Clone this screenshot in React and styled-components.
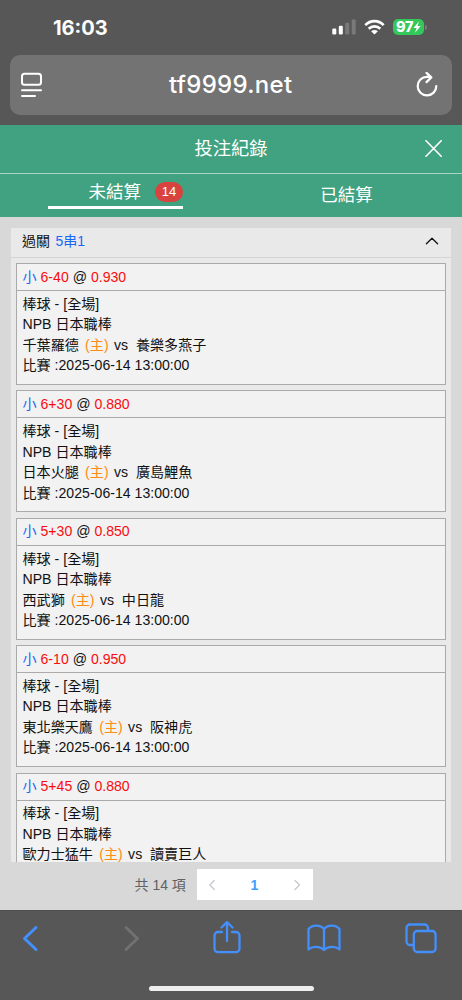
import React from "react";
import styled, { createGlobalStyle } from "styled-components";

const GlobalStyle = createGlobalStyle`
  * {
    box-sizing: border-box;
  }

  body {
    margin: 0;
    background: #575757;
    font-family: "Liberation Sans", "Noto Sans CJK TC", sans-serif;
  }
`;

const Phone = styled.div`
  display: flex;
  flex-direction: column;
  width: 462px;
  height: 1000px;
  overflow: hidden;
  background: #575757;
`;

const StatusBar = styled.div`
  display: flex;
  align-items: center;
  height: 55px;
  padding: 0 35px 1px 53px;
  color: #fff;
`;

const Clock = styled.span`
  flex: 1;
  padding-top: 1px;
  font: 700 20px/24px Inter, sans-serif;
`;

const StatusIcons = styled.div`
  display: flex;
  align-items: center;
  gap: 8px;
`;

const Battery = styled.div`
  display: flex;
  align-items: center;
  gap: 1px;
`;

const BatteryBody = styled.span`
  display: flex;
  align-items: center;
  justify-content: center;
  width: 31px;
  height: 16px;
  border-radius: 5px;
  background: #34c759;
  font: 800 14.5px/16px Inter, sans-serif;
  letter-spacing: -0.4px;
`;

const BatteryTip = styled.span`
  width: 2px;
  height: 5px;
  border-radius: 0 2px 2px 0;
  background: #7b7b7b;
`;

const AddressBar = styled.div`
  display: flex;
  align-items: center;
  justify-content: space-between;
  height: 60px;
  margin: 0 10px 10px;
  padding: 0 14px 0 11px;
  border-radius: 10px;
  background: #737373;
  color: #fff;
`;

const Url = styled.span`
  padding-left: 3.5px;
  font: 500 24px/30px Inter, sans-serif;
  letter-spacing: 0.3px;
`;

const TitleBar = styled.header`
  display: grid;
  grid-template-columns: 1fr auto 1fr;
  align-items: center;
  height: 49px;
  padding: 0 20px 1px;
  border-bottom: 1px solid #a9d3c4;
  background: #40a280;
  color: #fff;

  svg {
    justify-self: end;
  }
`;

const Title = styled.h1`
  grid-column: 2;
  margin: 0;
  padding-top: 1px;
  font-size: 18.3px;
  font-weight: 400;
  line-height: 26px;
`;

const Tabs = styled.nav`
  display: grid;
  grid-template-columns: 1fr 1fr;
  height: 43px;
  background: #40a280;
`;

const Tab = styled.div`
  display: flex;
  justify-content: center;
  padding-top: ${p => (p.$active ? 4 : 7)}px;
  color: #fff;
  font-size: 17.5px;
  line-height: 28px;
`;

const ActiveLabel = styled.span`
  display: flex;
  align-items: center;
  justify-content: flex-end;
  gap: 14px;
  width: 135px;
  height: 31px;
  border-bottom: 3px solid #fff;
`;

const Count = styled.span`
  width: 28px;
  border-radius: 10px;
  background: #d9433f;
  font-size: 13px;
  line-height: 20px;
  text-align: center;
`;

const Content = styled.main`
  display: flex;
  flex-direction: column;
  height: 693px;
  padding: 11px 11px 0;
  background: #d8d8d8;
`;

const List = styled.section`
  height: 634px;
  overflow: hidden;
  background: #e9e9e9;
`;

const ListHeader = styled.div`
  display: flex;
  align-items: center;
  justify-content: space-between;
  height: 30px;
  padding: 0 12px 3px 11px;
  border-bottom: 1px solid #d5d5d5;
  color: #111;
  font-size: 14px;
  line-height: 20px;
`;

const Parlay = styled.span`
  margin-left: 5.5px;
  color: #1768f5;
`;

const Cards = styled.div`
  display: flex;
  flex-direction: column;
  gap: 5.4px;
  padding: 5px 5px 0;
`;

const Card = styled.article`
  flex: none;
  height: 122px;
  border: 1px solid #aaa;
  background: #f2f2f2;
  color: #111;
  font-size: 14.1px;
  line-height: 20.5px;
  white-space: pre;
`;

const Odds = styled.div`
  height: 27px;
  padding: 2.5px 6px 0 5.5px;
  border-bottom: 1px solid #aaa;
`;

const Details = styled.div`
  padding: 2.8px 6px 0 5.5px;
`;

const Pick = styled.span`
  color: #2167f3;
`;

const Value = styled.span`
  color: #fa0c0c;
`;

const Home = styled.span`
  margin: 0 1.5px 0 2.3px;
  color: #ff8b10;
`;

const Pagination = styled.div`
  display: flex;
  align-items: center;
  gap: 11px;
  height: 31px;
  margin: 7px 0 0 123.5px;
  color: #606266;
  font-size: 14px;
`;

const Total = styled.span`
  padding-bottom: 2px;
  white-space: nowrap;
`;

const Pager = styled.div`
  display: flex;
  align-items: center;
  justify-content: space-between;
  width: 116px;
  height: 31px;
  padding: 0 12px 0 11px;
  background: #fff;
  color: #409eff;
  font-weight: 700;
`;

const Toolbar = styled.footer`
  display: grid;
  grid-template-columns: 99.5px 93.5px 94px 98px auto;
  height: 76px;
  padding: 9px 0 0 20px;
  border-top: 1px solid #505050;
  color: #438ffc;
`;

const HomeIndicator = styled.div`
  width: 165px;
  height: 5px;
  margin: 0 auto;
  border-radius: 3px;
  background: #eee;
`;

const stroke = {
  fill: "none",
  stroke: "currentColor",
  strokeLinecap: "round",
  strokeLinejoin: "round",
};

const Chevron = ({ right }) => (
  <svg width="8" height="12" viewBox="0 0 8 12" {...stroke} stroke="#c4c7cc" strokeWidth="1.2">
    <path d={right ? "M2 1.5l4.5 4.5L2 10.5" : "M6.3 1.5L1.8 6l4.5 4.5"} />
  </svg>
);

const bets = [
  { line: "6-40", odds: "0.930", home: "千葉羅德", away: "養樂多燕子", time: "2025-06-14 13:00:00" },
  { line: "6+30", odds: "0.880", home: "日本火腿", away: "廣島鯉魚", time: "2025-06-14 13:00:00" },
  { line: "5+30", odds: "0.850", home: "西武獅", away: "中日龍", time: "2025-06-14 13:00:00" },
  { line: "6-10", odds: "0.950", home: "東北樂天鷹", away: "阪神虎", time: "2025-06-14 13:00:00" },
  { line: "5+45", odds: "0.880", home: "歐力士猛牛", away: "讀賣巨人" },
];

const BetCard = ({ line, odds, home, away, time }) => (
  <Card>
    <Odds>
      <Pick>小</Pick> <Value>{line}</Value> @ <Value>{odds}</Value>
    </Odds>
    <Details>
      <div>棒球 - [全場]</div>
      <div>NPB 日本職棒</div>
      <div>
        {home} <Home>(主)</Home> vs {" "}{away}
      </div>
      {time && <div>比賽 :{time}</div>}
    </Details>
  </Card>
);

const App = () => (
  <>
    <GlobalStyle />
    <Phone>
      <StatusBar>
        <Clock>16:03</Clock>
        <StatusIcons>
          <svg width="24" height="16" viewBox="0 0 24 16" fill="#fff">
            <rect x="0.3" y="9.5" width="4" height="6" rx="1.2" />
            <rect x="6.8" y="6.8" width="4" height="8.7" rx="1.2" />
            <rect x="13.2" y="3.7" width="4" height="11.8" rx="1.2" fill="#797979" />
            <rect x="19.7" y="0.5" width="4" height="15" rx="1.2" fill="#797979" />
          </svg>
          <svg width="21" height="16" viewBox="0 0 21 16" fill="none" stroke="#fff" strokeWidth="2.7">
            <path d="M1.3 6.1c5.2-5.2 13.2-5.2 18.4 0" />
            <path d="M4.7 9.7c3.3-3.2 8.3-3.2 11.6 0" />
            <path d="M7.1 12.3q3.4-2.7 6.8 0L10.5 15.6z" fill="#fff" stroke="none" />
          </svg>
          <Battery>
            <BatteryBody>
              97
              <svg width="8" height="12" viewBox="0 0 8 12" fill="#fff">
                <path d="M6 .3L.5 7h3L2 11.7 7.7 5H4.6z" />
              </svg>
            </BatteryBody>
            <BatteryTip />
          </Battery>
        </StatusIcons>
      </StatusBar>
      <AddressBar>
        <svg width="21" height="26" viewBox="0 0 21 26" {...stroke} strokeWidth="2">
          <rect x="1" y="1.7" width="19" height="11" rx="2.5" />
          <path d="M1 18.3h19M1 24h13" />
        </svg>
        <Url>tf9999.net</Url>
        <svg width="22" height="26" viewBox="0 0 22 26" {...stroke} strokeWidth="2.2">
          <path d="M11 4.800A9.300 9.300 0 1 0 20.300 14" />
          <path d="M10.5 .9l4.800 4.500-4.800 4.700M11 4.900h3.700" />
        </svg>
      </AddressBar>
      <TitleBar>
        <Title>投注紀錄</Title>
        <svg width="17" height="17" viewBox="0 0 17 17" {...stroke} stroke="#fff" strokeWidth="1.6">
          <path d="M1 .8l15.2 15.4M16.2.8L1 16.2" />
        </svg>
      </TitleBar>
      <Tabs>
        <Tab $active>
          <ActiveLabel>
            未結算<Count>14</Count>
          </ActiveLabel>
        </Tab>
        <Tab>已結算</Tab>
      </Tabs>
      <Content>
        <List>
          <ListHeader>
            <span>
              過關<Parlay>5串1</Parlay>
            </span>
            <svg width="14" height="8" viewBox="0 0 14 8" {...stroke} strokeWidth="1.3">
              <path d="M1.4 6.8L7 1.2l5.6 5.6" />
            </svg>
          </ListHeader>
          <Cards>
            {bets.map(bet => (
              <BetCard key={bet.home} {...bet} />
            ))}
          </Cards>
        </List>
        <Pagination>
          <Total>共 14 項</Total>
          <Pager>
            <Chevron />
            1
            <Chevron right />
          </Pager>
        </Pagination>
      </Content>
      <Toolbar>
        <svg width="22" height="38" viewBox="0 0 22 38" {...stroke} strokeWidth="3">
          <path d="M16 7.5L4.5 18.5 16 29.5" />
        </svg>
        <svg width="22" height="38" viewBox="0 0 22 38" {...stroke} stroke="#717171" strokeWidth="3">
          <path d="M6 7.5l11.5 11L6 29.5" />
        </svg>
        <svg width="28" height="38" viewBox="0 0 28 38" {...stroke} strokeWidth="2.3">
          <path d="M9 12H5a3.5 3.5 0 0 0-3.5 3.5v13A3.5 3.5 0 0 0 5 32.2h18a3.5 3.5 0 0 0 3.5-3.5V15.5A3.5 3.5 0 0 0 23 12h-4" />
          <path d="M14 21V2.5M8.5 7.5L14 2.2l5.5 5.3" />
        </svg>
        <svg width="34" height="38" viewBox="0 0 34 38" {...stroke} strokeWidth="2.3">
          <path d="M17 9C13.5 4.5 5 4.5 1.5 9v20.500c4-3.5 11.5-3.5 15.5.5 4-4 11.5-4 15.5-.5V9C29 4.5 20.5 4.5 17 9zM17 9v21" />
        </svg>
        <svg width="32" height="38" viewBox="0 0 32 38" {...stroke} strokeWidth="2.3">
          <rect x="8.8" y="11" width="21.8" height="21" rx="3.5" />
          <path d="M8.8 25H5a3.5 3.5 0 0 1-3.5-3.5V8A3.5 3.5 0 0 1 5 4.5h14.5A3.5 3.5 0 0 1 23 8v3" />
        </svg>
      </Toolbar>
      <HomeIndicator />
    </Phone>
  </>
);

export default App;
